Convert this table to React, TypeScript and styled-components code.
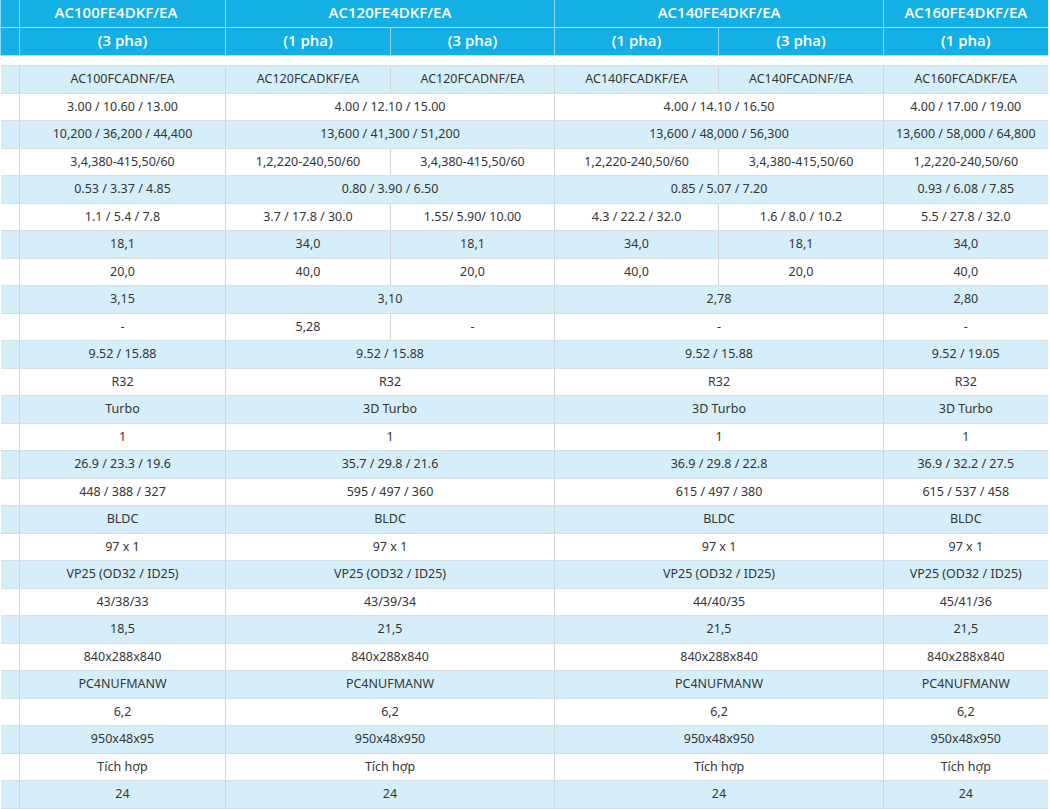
import React from "react";
import styled, { createGlobalStyle } from "styled-components";

const Global = createGlobalStyle`
  html, body { margin: 0; padding: 0; background: #ffffff; }
  body { font-family: "Noto Sans", "Open Sans", Arial, sans-serif; }
`;

const Page = styled.div`
  width: 1050px;
  height: 809px;
  overflow: hidden;
  background: #ffffff;
`;

const Table = styled.table`
  width: 1047px;
  border-collapse: collapse;
  table-layout: fixed;
`;

const HeadCell = styled.th<{ $shift?: boolean }>`
  background: #14afe4;
  color: #ffffff;
  font-family: "Open Sans", "Noto Sans", sans-serif;
  font-weight: 600;
  font-size: 15px;
  height: 24px;
  padding: 0 ${(p) => (p.$shift ? "13px" : "0")} 3px 0;
  text-align: center;
  border-left: 1px solid #8fd6f1;
  border-bottom: 1px solid #a7def3;
  white-space: nowrap;
  line-height: 18px;
`;

const GapRow = styled.tr`
  height: 10px;
`;

const GapCell = styled.td`
  padding: 0;
  background: #ffffff;
`;

const DataRow = styled.tr<{ $alt: boolean }>`
  height: 27.5px;
  background: ${(p) => (p.$alt ? "#d6eef9" : "#ffffff")};
`;

const Cell = styled.td`
  padding: 0;
  text-align: center;
  font-size: 12.5px;
  color: #353535;
  border-left: 1px solid #d2d6d8;
  border-top: 1px solid #d5dfe4;
  border-bottom: 1px solid #d5dfe4;
  white-space: nowrap;
  line-height: 16px;
`;

const EdgeCell = styled.td`
  padding: 0;
  border-top: 1px solid #d5dfe4;
  border-bottom: 1px solid #d5dfe4;
`;

type C = [string, number];

const widths = [19, 206, 165, 164, 164, 165, 164];

const rows: C[][] = [
  [["AC100FCADNF/EA", 1], ["AC120FCADKF/EA", 1], ["AC120FCADNF/EA", 1], ["AC140FCADKF/EA", 1], ["AC140FCADNF/EA", 1], ["AC160FCADKF/EA", 1]],
  [["3.00 / 10.60 / 13.00", 1], ["4.00 / 12.10 / 15.00", 2], ["4.00 / 14.10 / 16.50", 2], ["4.00 / 17.00 / 19.00", 1]],
  [["10,200 / 36,200 / 44,400", 1], ["13,600 / 41,300 / 51,200", 2], ["13,600 / 48,000 / 56,300", 2], ["13,600 / 58,000 / 64,800", 1]],
  [["3,4,380-415,50/60", 1], ["1,2,220-240,50/60", 1], ["3,4,380-415,50/60", 1], ["1,2,220-240,50/60", 1], ["3,4,380-415,50/60", 1], ["1,2,220-240,50/60", 1]],
  [["0.53 / 3.37 / 4.85", 1], ["0.80 / 3.90 / 6.50", 2], ["0.85 / 5.07 / 7.20", 2], ["0.93 / 6.08 / 7.85", 1]],
  [["1.1 / 5.4 / 7.8", 1], ["3.7 / 17.8 / 30.0", 1], ["1.55/ 5.90/ 10.00", 1], ["4.3 / 22.2 / 32.0", 1], ["1.6 / 8.0 / 10.2", 1], ["5.5 / 27.8 / 32.0", 1]],
  [["18,1", 1], ["34,0", 1], ["18,1", 1], ["34,0", 1], ["18,1", 1], ["34,0", 1]],
  [["20,0", 1], ["40,0", 1], ["20,0", 1], ["40,0", 1], ["20,0", 1], ["40,0", 1]],
  [["3,15", 1], ["3,10", 2], ["2,78", 2], ["2,80", 1]],
  [["-", 1], ["5,28", 1], ["-", 1], ["-", 2], ["-", 1]],
  [["9.52 / 15.88", 1], ["9.52 / 15.88", 2], ["9.52 / 15.88", 2], ["9.52 / 19.05", 1]],
  [["R32", 1], ["R32", 2], ["R32", 2], ["R32", 1]],
  [["Turbo", 1], ["3D Turbo", 2], ["3D Turbo", 2], ["3D Turbo", 1]],
  [["1", 1], ["1", 2], ["1", 2], ["1", 1]],
  [["26.9 / 23.3 / 19.6", 1], ["35.7 / 29.8 / 21.6", 2], ["36.9 / 29.8 / 22.8", 2], ["36.9 / 32.2 / 27.5", 1]],
  [["448 / 388 / 327", 1], ["595 / 497 / 360", 2], ["615 / 497 / 380", 2], ["615 / 537 / 458", 1]],
  [["BLDC", 1], ["BLDC", 2], ["BLDC", 2], ["BLDC", 1]],
  [["97 x 1", 1], ["97 x 1", 2], ["97 x 1", 2], ["97 x 1", 1]],
  [["VP25 (OD32 / ID25)", 1], ["VP25 (OD32 / ID25)", 2], ["VP25 (OD32 / ID25)", 2], ["VP25 (OD32 / ID25)", 1]],
  [["43/38/33", 1], ["43/39/34", 2], ["44/40/35", 2], ["45/41/36", 1]],
  [["18,5", 1], ["21,5", 2], ["21,5", 2], ["21,5", 1]],
  [["840x288x840", 1], ["840x288x840", 2], ["840x288x840", 2], ["840x288x840", 1]],
  [["PC4NUFMANW", 1], ["PC4NUFMANW", 2], ["PC4NUFMANW", 2], ["PC4NUFMANW", 1]],
  [["6,2", 1], ["6,2", 2], ["6,2", 2], ["6,2", 1]],
  [["950x48x95", 1], ["950x48x950", 2], ["950x48x950", 2], ["950x48x950", 1]],
  [["Tích hợp", 1], ["Tích hợp", 2], ["Tích hợp", 2], ["Tích hợp", 1]],
  [["24", 1], ["24", 2], ["24", 2], ["24", 1]],
];

export default function App() {
  return (
    <Page>
      <Global />
      <Table>
        <colgroup>
          {widths.map((w, i) => (
            <col key={i} style={{ width: w }} />
          ))}
        </colgroup>
        <thead>
          <tr>
            <HeadCell />
            <HeadCell $shift>AC100FE4DKF/EA</HeadCell>
            <HeadCell colSpan={2}>AC120FE4DKF/EA</HeadCell>
            <HeadCell colSpan={2}>AC140FE4DKF/EA</HeadCell>
            <HeadCell>AC160FE4DKF/EA</HeadCell>
          </tr>
          <tr>
            <HeadCell />
            <HeadCell>(3 pha)</HeadCell>
            <HeadCell>(1 pha)</HeadCell>
            <HeadCell>(3 pha)</HeadCell>
            <HeadCell>(1 pha)</HeadCell>
            <HeadCell>(3 pha)</HeadCell>
            <HeadCell>(1 pha)</HeadCell>
          </tr>
        </thead>
        <tbody>
          <GapRow>
            <GapCell colSpan={7} />
          </GapRow>
          {rows.map((r, i) => (
            <DataRow key={i} $alt={i % 2 === 0}>
              <EdgeCell />
              {r.map(([t, s], j) => (
                <Cell key={j} colSpan={s}>
                  {t}
                </Cell>
              ))}
            </DataRow>
          ))}
        </tbody>
      </Table>
    </Page>
  );
}
